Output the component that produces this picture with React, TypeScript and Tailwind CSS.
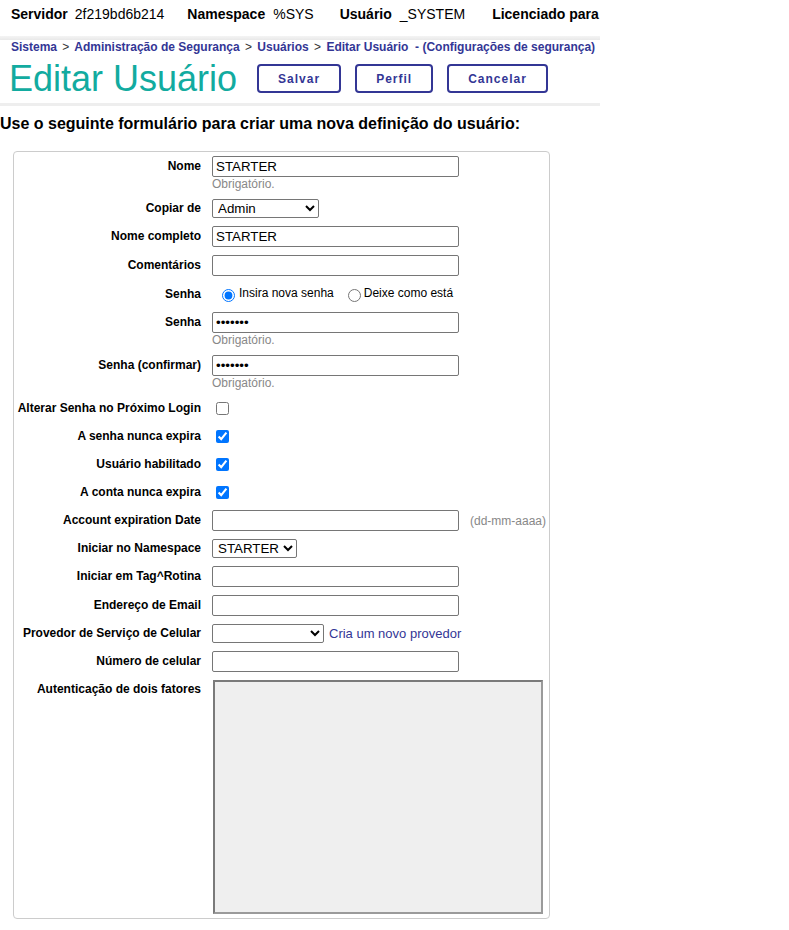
import React from 'react';

const FONT = { fontFamily: '"Liberation Sans", Arial, sans-serif' };

const inputCls = 'block w-[247px] h-[21px] border border-[#767676] rounded-[2px] px-[3px] text-[13.333px] text-black bg-white outline-none';
const selectCls = 'block h-[19px] border border-[#767676] rounded-[2px] pl-[1px] text-[13.333px] text-black bg-white';

const Label: React.FC<{ children: React.ReactNode; lh?: string }> = ({ children, lh = 'leading-[21px]' }) => (
    <div className={`w-[192px] shrink-0 pr-[5px] text-right text-[12px] font-bold text-black ${lh}`}>{children}</div>
);

const Help: React.FC<{ children: React.ReactNode }> = ({ children }) => (
    <div className="text-[12px] leading-[14px] text-[#888]">{children}</div>
);

const Sep = () => <span className="font-normal text-[#333] mx-[2px]">&gt;</span>;

const CheckRow: React.FC<{ label: string; checked?: boolean }> = ({ label, checked }) => (
    <div className="flex items-start">
        <Label lh="leading-[20px]">{label}</Label>
        <div className="pl-[6px] h-[20px] flex items-center">
            <input type="checkbox" defaultChecked={checked} className="ml-[4px] w-[13px] h-[13px] accent-[#0075ff]" />
        </div>
    </div>
);

const App: React.FC = () => {
    return (
        <div className="w-[789px] min-h-[930px] bg-white text-black" style={FONT}>
            <div className="w-[600px] overflow-hidden">
                {/* info bar */}
                <div className="h-[36px] pt-[5px] pl-[11px] flex text-[14px] leading-[18px] whitespace-nowrap">
                    <span className="font-bold mr-[7px]">Servidor</span>
                    <span className="mr-[23px]">2f219bd6b214</span>
                    <span className="font-bold mr-[8px]">Namespace</span>
                    <span className="mr-[26px]">%SYS</span>
                    <span className="font-bold mr-[8px]">Usuário</span>
                    <span className="mr-[27px]">_SYSTEM</span>
                    <span className="font-bold">Licenciado para</span>
                </div>
                <div className="h-[4px] bg-gradient-to-b from-[#f4f4f4] to-[#e9e9e9]" />

                {/* breadcrumb */}
                <div className="h-[18px] pl-[11px] text-[12px] leading-[14px] font-bold text-[#333695] whitespace-nowrap">
                    Sistema <Sep /> Administração de Segurança <Sep /> Usuários <Sep /> Editar Usuário&nbsp;&nbsp;- (Configurações de segurança)
                </div>

                {/* title + buttons */}
                <div className="h-[41px] flex items-center pl-[9px]">
                    <h1 className="text-[36px] leading-[41px] text-[#12aba0] font-normal mr-[20px]">Editar Usuário</h1>
                    <div className="flex gap-[14px]">
                        {['Salvar', 'Perfil', 'Cancelar'].map((b) => (
                            <button
                                key={b}
                                className="h-[29px] px-[19px] border-2 border-[#333695] rounded-[4px] text-[12px] font-bold tracking-[1px] text-[#333695] bg-white"
                            >
                                {b}
                            </button>
                        ))}
                    </div>
                </div>
                <div className="mt-[4px] h-[3px] bg-[#eeeeee]" />
            </div>

            <p className="mt-[9px] text-[16px] leading-[18px] font-bold">
                Use o seguinte formulário para criar uma nova definição do usuário:
            </p>

            {/* form */}
            <div className="ml-[13px] mt-[18px] w-[537px] border border-[#cccccc] rounded-[4px] pt-[4px] pb-[4px] flex flex-col gap-[8px]">
                <div className="flex items-start">
                    <Label>Nome</Label>
                    <div className="pl-[6px]">
                        <input className={inputCls} defaultValue="STARTER" />
                        <Help>Obrigatório.</Help>
                    </div>
                </div>

                <div className="flex items-start">
                    <Label lh="leading-[19px]">Copiar de</Label>
                    <div className="pl-[6px]">
                        <select className={`${selectCls} w-[107px]`} defaultValue="Admin">
                            <option>Admin</option>
                        </select>
                    </div>
                </div>

                <div className="flex items-start">
                    <Label>Nome completo</Label>
                    <div className="pl-[6px]">
                        <input className={inputCls} defaultValue="STARTER" />
                    </div>
                </div>

                <div className="flex items-start">
                    <Label>Comentários</Label>
                    <div className="pl-[6px]">
                        <input className={inputCls} />
                    </div>
                </div>

                <div className="flex items-start">
                    <Label lh="leading-[20px]">Senha</Label>
                    <div className="pl-[6px] h-[20px] flex items-center text-[12px]">
                        <label className="flex items-center ml-[10px]">
                            <input type="radio" name="senha" defaultChecked className="w-[13px] h-[13px] mt-[2px] mr-[4px] accent-[#0075ff]" />
                            <span className="-mt-[3px]">Insira nova senha</span>
                        </label>
                        <label className="flex items-center ml-[14px]">
                            <input type="radio" name="senha" className="w-[13px] h-[13px] mt-[2px] mr-[3px]" />
                            <span className="-mt-[3px]">Deixe como está</span>
                        </label>
                    </div>
                </div>

                <div className="flex items-start">
                    <Label>Senha</Label>
                    <div className="pl-[6px]">
                        <input type="password" className={inputCls} defaultValue="1234567" />
                        <Help>Obrigatório.</Help>
                    </div>
                </div>

                <div className="flex items-start">
                    <Label>Senha (confirmar)</Label>
                    <div className="pl-[6px]">
                        <input type="password" className={inputCls} defaultValue="1234567" />
                        <Help>Obrigatório.</Help>
                    </div>
                </div>

                <CheckRow label="Alterar Senha no Próximo Login" />
                <CheckRow label="A senha nunca expira" checked />
                <CheckRow label="Usuário habilitado" checked />
                <CheckRow label="A conta nunca expira" checked />

                <div className="flex items-start">
                    <Label>Account expiration Date</Label>
                    <div className="pl-[6px] flex items-center">
                        <input className={inputCls} />
                        <span className="ml-[11px] text-[12px] text-[#888]">(dd-mm-aaaa)</span>
                    </div>
                </div>

                <div className="flex items-start">
                    <Label lh="leading-[19px]">Iniciar no Namespace</Label>
                    <div className="pl-[6px]">
                        <select className={`${selectCls} w-[85px]`} defaultValue="STARTER">
                            <option>STARTER</option>
                        </select>
                    </div>
                </div>

                <div className="flex items-start">
                    <Label>Iniciar em Tag^Rotina</Label>
                    <div className="pl-[6px]">
                        <input className={inputCls} />
                    </div>
                </div>

                <div className="flex items-start">
                    <Label>Endereço de Email</Label>
                    <div className="pl-[6px]">
                        <input className={inputCls} />
                    </div>
                </div>

                <div className="flex items-start">
                    <Label lh="leading-[19px]">Provedor de Serviço de Celular</Label>
                    <div className="pl-[6px] h-[19px] flex items-center">
                        <select className={`${selectCls} w-[112px]`} defaultValue="">
                            <option value=""></option>
                        </select>
                        <a className="ml-[5px] text-[13px] leading-[19px] text-[#333695] cursor-pointer">Cria um novo provedor</a>
                    </div>
                </div>

                <div className="flex items-start">
                    <Label>Número de celular</Label>
                    <div className="pl-[6px]">
                        <input className={inputCls} />
                    </div>
                </div>

                <div className="flex items-start">
                    <Label lh="leading-[14px] pt-[2px]">Autenticação de dois fatores</Label>
                    <div className="pl-[7px]">
                        <div className="w-[330px] h-[234px] bg-[#efefef] border-2 border-t-[#7a7a7a] border-l-[#7a7a7a] border-r-[#9a9a9a] border-b-[#9a9a9a]" />
                    </div>
                </div>
            </div>
        </div>
    );
};

export default App;
